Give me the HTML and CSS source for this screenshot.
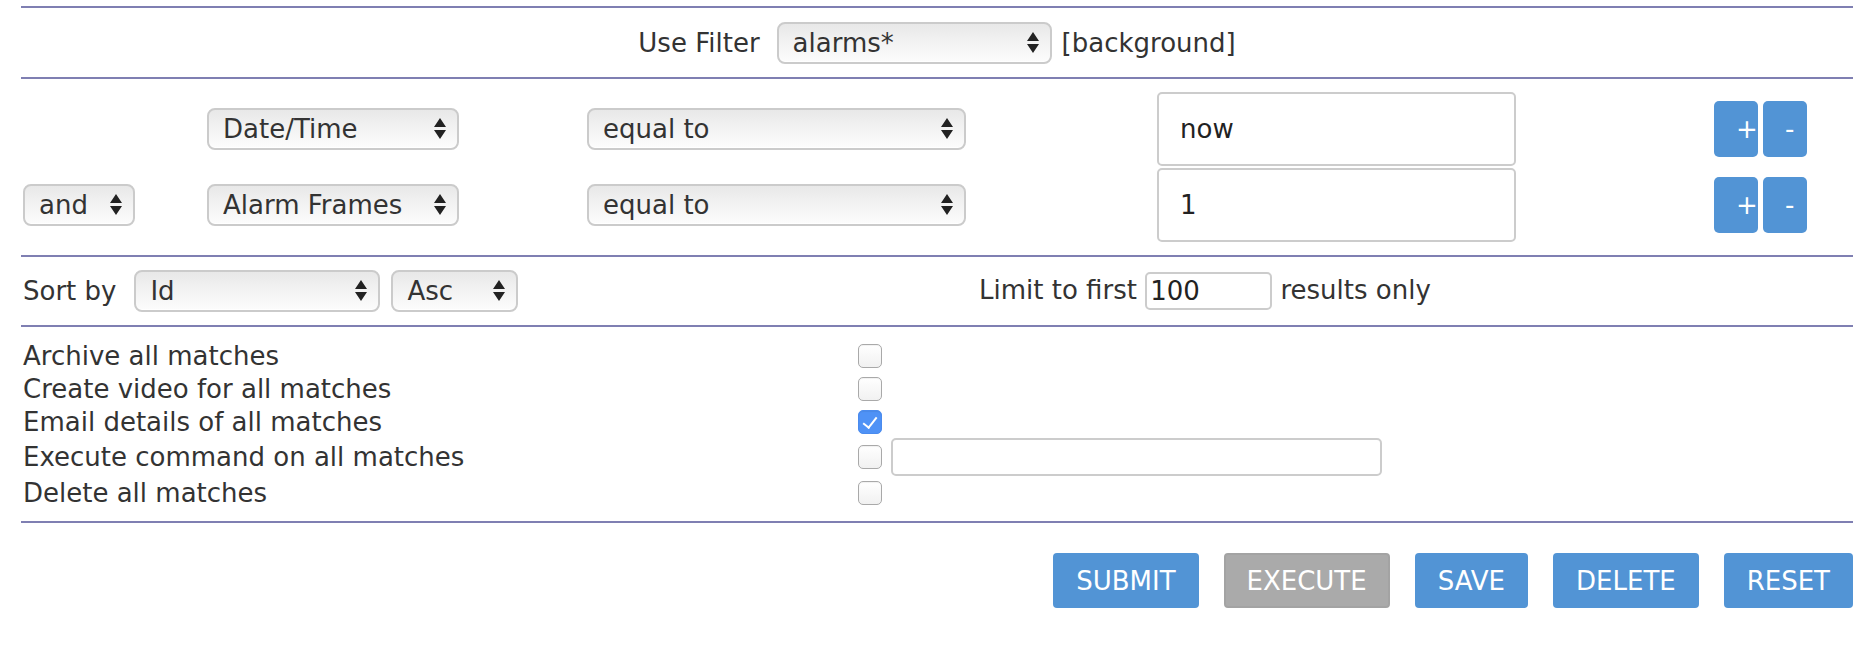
FILE: index.html
```html
<!DOCTYPE html>
<html lang="en">
<head>
  <meta charset="UTF-8" />
  <title>Filter</title>
  <link rel="stylesheet" href="styles.css">
</head>
<body>

  <div class="filter-page">
    <hr class="rule">

    <!-- === Saved filter === -->
    <div class="use-filter">
      <span class="label">Use Filter</span>
      <span class="pick">
        <select class="sel-filter">
          <option selected>alarms*</option>
        </select>
        <svg viewBox="0 0 12 21"><path d="M6 0 12 9H0Z M0 12H12L6 21Z"/></svg>
      </span>
      <span class="tag">[background]</span>
    </div>

    <hr class="rule">

    <!-- === Terms === -->
    <div class="terms">
      <div class="term">
        <div class="cell"></div>
        <div class="cell">
          <span class="pick">
            <select class="sel-attr"><option>Date/Time</option></select>
            <svg viewBox="0 0 12 21"><path d="M6 0 12 9H0Z M0 12H12L6 21Z"/></svg>
          </span>
        </div>
        <div class="cell">
          <span class="pick">
            <select class="sel-op"><option>equal to</option></select>
            <svg viewBox="0 0 12 21"><path d="M6 0 12 9H0Z M0 12H12L6 21Z"/></svg>
          </span>
        </div>
        <div class="cell"><input type="text" class="term-value" value="now"></div>
        <div class="cell steps">
          <button class="step">+</button>
          <button class="step">-</button>
        </div>
      </div>

      <div class="term">
        <div class="cell">
          <span class="pick">
            <select class="sel-conj"><option>and</option></select>
            <svg viewBox="0 0 12 21"><path d="M6 0 12 9H0Z M0 12H12L6 21Z"/></svg>
          </span>
        </div>
        <div class="cell">
          <span class="pick">
            <select class="sel-attr"><option>Alarm Frames</option></select>
            <svg viewBox="0 0 12 21"><path d="M6 0 12 9H0Z M0 12H12L6 21Z"/></svg>
          </span>
        </div>
        <div class="cell">
          <span class="pick">
            <select class="sel-op"><option>equal to</option></select>
            <svg viewBox="0 0 12 21"><path d="M6 0 12 9H0Z M0 12H12L6 21Z"/></svg>
          </span>
        </div>
        <div class="cell"><input type="text" class="term-value" value="1"></div>
        <div class="cell steps">
          <button class="step">+</button>
          <button class="step">-</button>
        </div>
      </div>
    </div>

    <hr class="rule">

    <!-- === Sorting === -->
    <div class="sort-row">
      <div class="sort-left">
        <span class="label">Sort by</span>
        <span class="pick">
          <select class="sel-sort"><option>Id</option></select>
          <svg viewBox="0 0 12 21"><path d="M6 0 12 9H0Z M0 12H12L6 21Z"/></svg>
        </span>
        <span class="pick">
          <select class="sel-dir"><option>Asc</option></select>
          <svg viewBox="0 0 12 21"><path d="M6 0 12 9H0Z M0 12H12L6 21Z"/></svg>
        </span>
      </div>
      <div class="sort-right">
        Limit to first <input type="text" class="limit" value="100"> results only
      </div>
    </div>

    <hr class="rule">

    <!-- === Actions === -->
    <div class="actions">
      <div class="act">Archive all matches</div>
      <div class="act-box"><input type="checkbox"></div>

      <div class="act">Create video for all matches</div>
      <div class="act-box"><input type="checkbox"></div>

      <div class="act">Email details of all matches</div>
      <div class="act-box"><input type="checkbox" checked></div>

      <div class="act tall">Execute command on all matches</div>
      <div class="act-box tall"><input type="checkbox"><input type="text" class="command"></div>

      <div class="act">Delete all matches</div>
      <div class="act-box"><input type="checkbox"></div>
    </div>

    <hr class="rule">

    <div class="buttons">
      <button class="btn">SUBMIT</button>
      <button class="btn btn-off" disabled>EXECUTE</button>
      <button class="btn">SAVE</button>
      <button class="btn">DELETE</button>
      <button class="btn">RESET</button>
    </div>
  </div>

</body>
</html>
```

FILE: styles.css
```css
:root {
  --rule-color: #7f7fb2;
  --button-color: #5294d5;
  --text-color: #333;
}

* {
  box-sizing: border-box;
}

body {
  margin: 0;
  background: #fff;
  color: var(--text-color);
  font-family: "DejaVu Sans", Verdana, sans-serif;
  font-size: 26px;
}

.filter-page {
  padding: 6px 21px 0;
}

.rule {
  border: 0;
  border-top: 2px solid var(--rule-color);
  margin: 0;
}

/* selects */
.pick {
  position: relative;
  display: inline-block;
  vertical-align: middle;
}

.pick select {
  appearance: none;
  -webkit-appearance: none;
  display: block;
  height: 42px;
  padding: 0 36px 0 14px;
  border: 2px solid #cbcbcb;
  border-radius: 8px;
  background: linear-gradient(#e8e8e8, #f4f4f4 55%, #fcfcfc);
  box-shadow: inset 0 -1px 0 #fff;
  color: var(--text-color);
  font: inherit;
  outline: none;
}

.pick svg {
  position: absolute;
  right: 13px;
  top: 10px;
  width: 12px;
  height: 21px;
  fill: #222;
  pointer-events: none;
}

.sel-filter { width: 275px; }
.sel-attr { width: 252px; }
.sel-op { width: 379px; }
.sel-conj { width: 112px; }
.sel-sort { width: 246px; }
.sel-dir { width: 127px; }

input[type="text"] {
  border: 2px solid #cccccc;
  border-radius: 5px;
  font: inherit;
  color: #222;
  background: #fff;
  outline: none;
}

/* use filter */
.use-filter {
  height: 69px;
  display: flex;
  justify-content: center;
  align-items: center;
}

.use-filter .label {
  margin-right: 17px;
}

.use-filter .tag {
  margin-left: 10px;
}

/* terms */
.terms {
  padding: 12px 0 12px 2px;
}

.term {
  display: grid;
  grid-template-columns: 184px 380px 570px 557px auto;
  align-items: center;
  height: 76px;
}

.term-value {
  width: 359px;
  height: 74px;
  padding: 0 0 0 21px;
}

.steps {
  display: flex;
  gap: 5px;
}

.step {
  width: 44px;
  height: 56px;
  padding: 0 0 0 22px;
  border: 0;
  border-radius: 5px;
  background: var(--button-color);
  color: #fff;
  font: inherit;
  text-align: left;
  line-height: 56px;
}

/* sort */
.sort-row {
  display: grid;
  grid-template-columns: 956px auto;
  align-items: center;
  height: 68px;
  padding-left: 2px;
}

.sort-left {
  display: flex;
  align-items: center;
}

.sort-left .label {
  margin-right: 18px;
}

.sort-left .pick + .pick {
  margin-left: 11px;
}

.limit {
  width: 127px;
  height: 38px;
  padding: 0 3px;
  border-radius: 4px;
  vertical-align: middle;
}

/* actions */
.actions {
  display: grid;
  grid-template-columns: 835px auto;
  padding: 12px 0 12px 2px;
}

.act,
.act-box {
  height: 33px;
  display: flex;
  align-items: center;
}

.act.tall,
.act-box.tall {
  height: 38px;
}

.act-box input[type="checkbox"] {
  appearance: none;
  -webkit-appearance: none;
  position: relative;
  width: 24px;
  height: 24px;
  margin: 0;
  border: 1.5px solid #a9a9a9;
  border-radius: 5px;
  background: linear-gradient(#fff, #f1f1f1);
  box-shadow: inset 0 1px 1px rgba(0,0,0,0.06);
}

.act-box input[type="checkbox"]:checked {
  border-color: #4a8bee;
  background: #4f92f6;
}

.act-box input[type="checkbox"]:checked::after {
  content: "";
  position: absolute;
  left: 7px;
  top: 3px;
  width: 6px;
  height: 12px;
  border-right: 2.5px solid #fff;
  border-bottom: 2.5px solid #fff;
  transform: rotate(38deg);
}

.command {
  width: 491px;
  height: 38px;
  margin-left: 9px;
}

/* buttons */
.buttons {
  display: flex;
  justify-content: flex-end;
  gap: 25px;
  margin-top: 30px;
}

.btn {
  height: 55px;
  padding: 0 23px;
  border: 0;
  border-radius: 4px;
  background: var(--button-color);
  color: #fff;
  font: inherit;
  cursor: pointer;
}

.btn-off {
  padding: 0 21px;
  border: 2px solid #a3a3a3;
  background: #aaaaaa;
  cursor: default;
}
```
